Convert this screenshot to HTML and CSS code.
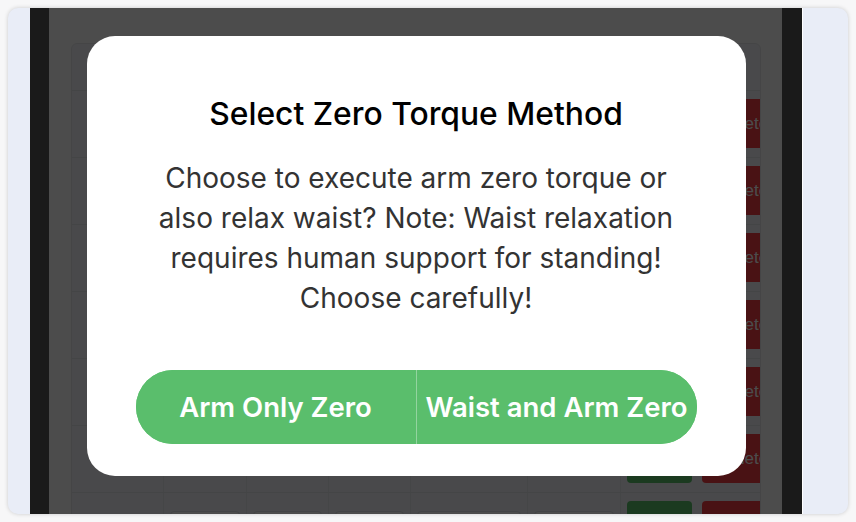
FILE: index.html
```html
<!DOCTYPE html>
<html lang="en">
<head>
<meta charset="utf-8">
<title>Select Zero Torque Method</title>
<link rel="stylesheet" href="styles.css">
</head>
<body>
<div class="frame">
  <div class="viewport">
    <div class="page">
      <div class="panel">
        <div class="grid-head">
          <div class="cell c1"></div><div class="cell c2"></div><div class="cell c3"></div><div class="cell c4"></div><div class="cell c5"></div><div class="cell c6"></div><div class="cell c7"></div>
        </div>
        <div class="grid-row">
          <div class="cell c1"></div><div class="cell c2"></div><div class="cell c3"></div><div class="cell c4"></div><div class="cell c5"></div><div class="cell c6"></div>
          <div class="cell c7 actions"><span class="act ok">Save</span><span class="act del">Delete</span></div>
        </div>
        <div class="grid-row">
          <div class="cell c1"></div><div class="cell c2"></div><div class="cell c3"></div><div class="cell c4"></div><div class="cell c5"></div><div class="cell c6"></div>
          <div class="cell c7 actions"><span class="act ok">Save</span><span class="act del">Delete</span></div>
        </div>
        <div class="grid-row">
          <div class="cell c1"></div><div class="cell c2"></div><div class="cell c3"></div><div class="cell c4"></div><div class="cell c5"></div><div class="cell c6"></div>
          <div class="cell c7 actions"><span class="act ok">Save</span><span class="act del">Delete</span></div>
        </div>
        <div class="grid-row">
          <div class="cell c1"></div><div class="cell c2"></div><div class="cell c3"></div><div class="cell c4"></div><div class="cell c5"></div><div class="cell c6"></div>
          <div class="cell c7 actions"><span class="act ok">Save</span><span class="act del">Delete</span></div>
        </div>
        <div class="grid-row">
          <div class="cell c1"></div><div class="cell c2"></div><div class="cell c3"></div><div class="cell c4"></div><div class="cell c5"></div><div class="cell c6"></div>
          <div class="cell c7 actions"><span class="act ok">Save</span><span class="act del">Delete</span></div>
        </div>
        <div class="grid-row">
          <div class="cell c1"></div><div class="cell c2"></div><div class="cell c3"></div><div class="cell c4"></div><div class="cell c5"></div><div class="cell c6"></div>
          <div class="cell c7 actions"><span class="act ok">Save</span><span class="act del">Delete</span></div>
        </div>
        <div class="grid-row">
          <div class="cell c1"></div>
          <div class="cell c2"><span class="field"></span></div>
          <div class="cell c3"><span class="field"></span></div>
          <div class="cell c4"><span class="field"></span></div>
          <div class="cell c5"><span class="field"></span></div>
          <div class="cell c6"><span class="field"></span></div>
          <div class="cell c7 actions"><span class="act ok">Add</span><span class="act del">Delete</span></div>
        </div>
      </div>
    </div>
    <div class="overlay">
      <div class="modal">
        <h2 class="modal-title">Select Zero Torque Method</h2>
        <p class="modal-text">Choose to execute arm zero torque or also relax waist? Note: Waist relaxation requires human support for standing! Choose carefully!</p>
        <div class="btn-group">
          <button class="btn">Arm Only Zero</button>
          <button class="btn">Waist and Arm Zero</button>
        </div>
      </div>
    </div>
  </div>
</div>
</body>
</html>
```
FILE: styles.css
```css
* { box-sizing: border-box; }
html, body { margin: 0; padding: 0; }
body {
  width: 856px;
  height: 522px;
  background: #f7f7f8;
  padding: 8px;
  overflow: hidden;
  font-family: Inter, "Noto Sans", sans-serif;
}
.frame {
  width: 840px;
  height: 506px;
  background: #e9edf7;
  border-radius: 10px;
  box-shadow: 0 0 4px rgba(0,0,0,0.18);
  padding-left: 22px;
  overflow: hidden;
}
.viewport {
  position: relative;
  width: 773px;
  height: 506px;
  background: #585858;
  padding: 0 20px 0 19px;
  border-right: 1px solid #ffffff;
  overflow: hidden;
}
.page {
  height: 100%;
  background: #ffffff;
  padding: 35px 21px 0 22px;
}
.panel {
  height: 520px;
  background: #f4f6fa;
  border: 1px solid #e6e8ec;
  border-radius: 6px;
  overflow: hidden;
}
.grid-head, .grid-row {
  display: flex;
  border-bottom: 1px solid #e4e6ea;
}
.grid-head { height: 47px; }
.grid-row { height: 67px; }
.cell {
  flex: none;
  border-right: 1px solid #e8eaee;
  display: flex;
  align-items: flex-start;
  padding-top: 18px;
}
.c1 { width: 92px; }
.c2 { width: 83px; }
.c3 { width: 82px; }
.c4 { width: 82px; }
.c5 { width: 117px; }
.c6 { width: 93px; }
.c7 { width: 160px; border-right: none; }
.field {
  display: block;
  height: 34px;
  width: calc(100% - 12px);
  margin: 0 6px;
  border: 1px solid #dcdfe6;
  border-radius: 4px;
  background: #fff;
}
.actions {
  padding: 8px 0 0 6px;
  gap: 10px;
}
.act {
  height: 49px;
  border-radius: 4px;
  color: #ffffff;
  font-family: "Liberation Sans", Arial, sans-serif;
  font-size: 17px;
  display: flex;
  align-items: center;
  justify-content: center;
}
.act.ok { width: 65px; background: #5cc16c; }
.act.del { width: 76px; background: #f43f45; justify-content: flex-start; padding-left: 17px; }
.overlay {
  position: absolute;
  inset: 0;
  background: rgba(0,0,0,0.7);
  display: flex;
  justify-content: center;
  align-items: flex-start;
  padding-top: 28px;
}
.modal {
  width: 659px;
  background: #ffffff;
  border-radius: 28px;
  padding: 60px 49px 32px;
  display: flex;
  flex-direction: column;
  align-items: center;
  text-align: center;
}
.modal-title {
  margin: 0;
  font-size: 31.8px;
  line-height: 36px;
  font-weight: 500;
  color: #000000;
  white-space: nowrap;
}
.modal-text {
  margin: 26px 0 0;
  max-width: 540px;
  font-size: 28px;
  line-height: 40px;
  font-weight: 400;
  color: #333333;
}
.btn-group {
  margin-top: 52px;
  width: 100%;
  height: 74px;
  flex: none;
  display: flex;
  border-radius: 37px;
  overflow: hidden;
  background: #5abe6c;
}
.btn {
  flex: 1;
  border: none;
  background: #5abe6c;
  color: #ffffff;
  font-family: Inter, "Noto Sans", sans-serif;
  font-size: 27.5px;
  font-weight: 600;
  padding: 0;
  white-space: nowrap;
  overflow: visible;
}
.btn + .btn { border-left: 1px solid rgba(255,255,255,0.35); }
```
